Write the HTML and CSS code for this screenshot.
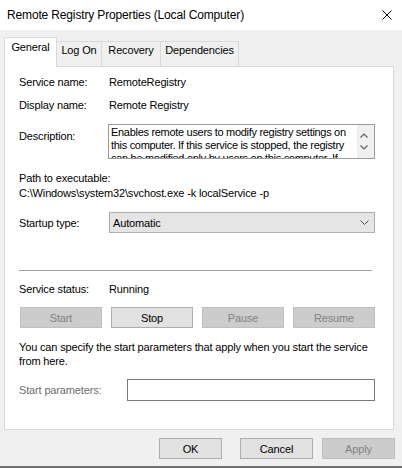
FILE: index.html
```html
<!DOCTYPE html>
<html lang="en">
<head>
<meta charset="utf-8">
<title>Remote Registry Properties (Local Computer)</title>
<link rel="stylesheet" href="styles.css">
</head>
<body>
<div class="window">
  <div class="titlebar">
    <span class="title">Remote Registry Properties (Local Computer)</span>
    <svg class="close" width="10" height="10" viewBox="0 0 10 10"><path d="M0.5 0.5 L9.5 9.5 M9.5 0.5 L0.5 9.5" stroke="#000" stroke-width="1" fill="none"/></svg>
  </div>
  <div class="tabs">
    <div class="tab tab-active tab-general">General</div>
    <div class="tab tab-logon">Log On</div>
    <div class="tab tab-recovery">Recovery</div>
    <div class="tab tab-deps">Dependencies</div>
  </div>
  <div class="panel">
    <div class="field f-service">
      <span class="label">Service name:</span>
      <span class="value">RemoteRegistry</span>
    </div>
    <div class="field f-display">
      <span class="label">Display name:</span>
      <span class="value">Remote Registry</span>
    </div>
    <div class="field f-desc">
      <span class="label desc-label">Description:</span>
      <div class="desc-box">
        <div class="desc-text">Enables remote users to modify registry settings on this computer. If this service is stopped, the registry can be modified only by users on this computer. If this service is disabled, any services that explicitly depend on it will fail to start.</div>
        <div class="desc-scroll">
          <svg width="8" height="5" viewBox="0 0 8 5"><polyline points="0.5,4.5 4,1 7.5,4.5" fill="none" stroke="#606060" stroke-width="1.2"/></svg>
          <svg width="8" height="5" viewBox="0 0 8 5"><polyline points="0.5,0.5 4,4 7.5,0.5" fill="none" stroke="#606060" stroke-width="1.2"/></svg>
        </div>
      </div>
    </div>
    <div class="path-block">
      <div>Path to executable:</div>
      <div>C:\Windows\system32\svchost.exe -k localService -p</div>
    </div>
    <div class="field f-startup">
      <span class="label">Startup type:</span>
      <div class="select">
        <span>Automatic</span>
        <svg width="9" height="5" viewBox="0 0 9 5"><polyline points="0.5,0.5 4.5,4.5 8.5,0.5" fill="none" stroke="#505050" stroke-width="1"/></svg>
      </div>
    </div>
    <div class="separator"></div>
    <div class="field f-status">
      <span class="label">Service status:</span>
      <span class="value">Running</span>
    </div>
    <div class="svc-buttons">
      <div class="btn btn-disabled">Start</div>
      <div class="btn">Stop</div>
      <div class="btn btn-disabled">Pause</div>
      <div class="btn btn-disabled">Resume</div>
    </div>
    <p class="hint">You can specify the start parameters that apply when you start the service from here.</p>
    <div class="field f-params">
      <span class="label label-disabled">Start parameters:</span>
      <div class="input"></div>
    </div>
  </div>
  <div class="footer">
    <div class="btn btn-ok">OK</div>
    <div class="btn btn-cancel">Cancel</div>
    <div class="btn btn-disabled btn-apply">Apply</div>
  </div>
  <div class="bottom-edge"></div>
</div>
</body>
</html>
```
FILE: styles.css
```css
* { box-sizing: border-box; }
html, body { margin: 0; padding: 0; }
body {
  width: 402px;
  height: 468px;
  overflow: hidden;
  background: #f0f0f0;
  font-family: "Liberation Sans", Arial, sans-serif;
  font-size: 11px;
  line-height: 14px;
  letter-spacing: -0.15px;
  color: #000;
}
.window { display: flex; flex-direction: column; height: 468px; }

.titlebar {
  height: 30px;
  background: #fff;
  display: flex;
  align-items: center;
  justify-content: space-between;
  padding: 0 10px 0 7px;
}
.title { font-size: 12px; letter-spacing: -0.15px; }
.close { display: block; }

.tabs {
  display: flex;
  align-items: flex-start;
  padding: 7px 0 0 4px;
  height: 37px;
  position: relative;
  z-index: 1;
}
.tab {
  height: 25px;
  margin-top: 4px;
  border-top: 1px solid #d9d9d9;
  border-right: 1px solid #d9d9d9;
  background: #f0f0f0;
  text-align: center;
  padding-top: 1px;
  white-space: nowrap;
}
.tab-active {
  height: 30px;
  margin-top: 0;
  background: #fff;
  border-left: 1px solid #d9d9d9;
  padding-top: 2px;
}
.tab-general { width: 53px; }
.tab-logon { width: 45px; }
.tab-recovery { width: 59px; }
.tab-deps { width: 78px; }

.panel {
  margin: -1px 8px 0 4px;
  height: 364px;
  border: 1px solid #d9d9d9;
  background: #fff;
  padding: 0 18px 0 14px;
  display: flex;
  flex-direction: column;
}

.field { display: flex; align-items: center; }
.label { width: 90px; flex: none; }
.label-disabled { color: #6d6d6d; width: 108px; }

.f-service { margin-top: 8px; }
.f-display { margin-top: 9px; }
.f-desc { margin-top: 12px; align-items: flex-start; }
.desc-label { margin-top: 5px; }

.desc-box {
  margin-left: -1px;
  width: 268px;
  height: 35px;
  border: 1px solid #9a9a9a;
  display: flex;
  overflow: hidden;
}
.desc-text {
  flex: 1;
  padding: 1px 2px 0 2px;
  line-height: 13px;
  letter-spacing: -0.3px;
  overflow: hidden;
}
.desc-scroll {
  width: 17px;
  flex: none;
  background: #f0f0f0;
  display: flex;
  flex-direction: column;
  align-items: center;
  justify-content: center;
  gap: 7px;
  padding-right: 4px;
}
.desc-scroll svg { display: block; }

.path-block { margin-top: 12px; line-height: 15px; }

.f-startup { margin-top: 11px; }
.select {
  width: 267px;
  height: 21px;
  background: #e5e5e5;
  border: 1px solid #adadad;
  display: flex;
  align-items: center;
  justify-content: space-between;
  padding: 0 5px 0 3px;
}
.select svg { display: block; }

.separator {
  margin-top: 37px;
  width: 353px;
  height: 1px;
  background: #a0a0a0;
}

.f-status { margin-top: 11px; }

.svc-buttons {
  margin: 11px 0 0 1px;
  width: 355px;
  display: grid;
  grid-template-columns: repeat(4, 1fr);
  gap: 9px;
}

.btn {
  height: 21px;
  border: 1px solid #adadad;
  background: #e1e1e1;
  display: flex;
  align-items: center;
  justify-content: center;
  white-space: nowrap;
}
.btn-disabled {
  background: #cccccc;
  border-color: #bfbfbf;
  color: #838383;
}

.hint { margin: 12px 0 0 0; }

.f-params { margin-top: 11px; }
.input {
  width: 249px;
  height: 22px;
  border: 1px solid #7a7a7a;
  background: #fff;
}

.footer {
  margin-top: 8px;
  display: flex;
  justify-content: flex-end;
  padding-right: 7px;
}
.btn-ok { width: 63px; }
.btn-cancel { width: 73px; margin-left: 18px; }
.btn-apply { width: 73px; margin-left: 9px; }

.bottom-edge {
  margin-top: 7px;
  height: 2px;
  background: #6f6f6f;
}
```
